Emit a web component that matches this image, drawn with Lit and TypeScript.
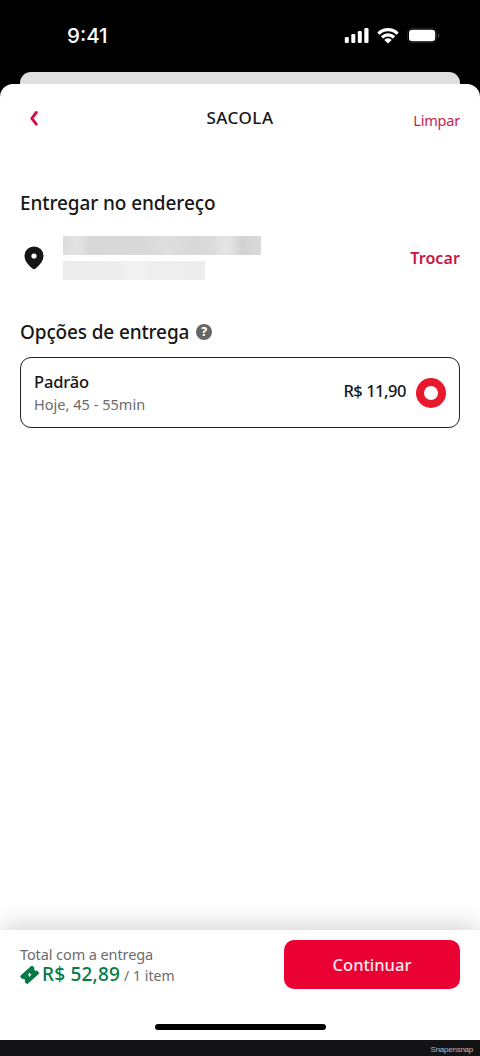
import { LitElement, html, css } from "lit";
import { customElement } from "lit/decorators.js";

@customElement("status-bar")
class StatusBar extends LitElement {
  static styles = css`
    :host { display: flex; height: 72px; box-sizing: border-box; padding: 24px 40px 0 67px; justify-content: space-between; color: #fff; }
    .time { font: 500 20.500px/24px Inter, sans-serif; height: 24px; }
    svg { display: block; margin-top: 1px; }
  `;
  render() {
    return html`
      <div class="time">9:41</div>
      <svg width="96" height="22" viewBox="344 25 96 22" fill="#fff">
        <rect x="344.8" y="37" width="4" height="6" rx="1.2" />
        <rect x="351.3" y="34" width="4" height="9" rx="1.2" />
        <rect x="357.8" y="31" width="4" height="12" rx="1.2" />
        <rect x="364.3" y="28" width="4.2" height="15" rx="1.2" />
        <path d="M388 28c4 0 7.600 1.500 10.300 4.100.3.300.3.600 0 .9l-1.500 1.500c-.3.300-.6.300-.9 0a11.400 11.400 0 0 0-15.800 0c-.3.300-.6.300-.9 0l-1.500-1.500c-.3-.3-.3-.6 0-.9A14.800 14.800 0 0 1 388 28Z" />
        <path d="M388 33.200c2.600 0 5 1 6.800 2.700.3.300.3.600 0 .9l-1.500 1.500c-.3.300-.6.300-.9 0a6.400 6.400 0 0 0-8.800 0c-.3.300-.6.300-.9 0l-1.500-1.500c-.3-.3-.3-.6 0-.9A9.800 9.800 0 0 1 388 33.200Z" />
        <path d="M388 38.300c1.300 0 2.400.4 3.300 1.200.3.300.3.600 0 .9l-2.800 2.500c-.3.300-.7.300-1 0l-2.800-2.500c-.3-.3-.3-.6 0-.9.9-.8 2-1.200 3.300-1.200Z" />
        <rect x="407.500" y="28.300" width="29" height="14.500" rx="4.500" fill="none" stroke="#242424" />
        <rect x="409" y="29.800" width="26.200" height="11.500" rx="3.300" />
        <path d="M438 33.300c1.800.8 1.800 3.700 0 4.500Z" fill="#555" />
      </svg>
    `;
  }
}

@customElement("address-section")
class AddressSection extends LitElement {
  static styles = css`
    :host { display: block; }
    .title { margin: 0; font-size: 19px; line-height: 26px; font-weight: 500; letter-spacing: -0.1px; white-space: nowrap; color: #161616; }
    .row { display: flex; align-items: center; margin-top: 19px; height: 45px; }
    .pin { display: block; margin: 0 19.400px 0 4px; flex: none; }
    .lines { display: flex; flex-direction: column; gap: 6px; flex: 1; }
    .bar { height: 19px; }
    .street { width: 198px; background: linear-gradient(90deg, #dcdcdc, #e3e3e3 7%, #d8d8d8 14%, #d9d9d9 40%, #dedede 53%, #d8d8d8 68%, #dcdcdc 76%, #e5e5e5 82%, #dfdfdf 86%, #d2d2d2 90%, #dadada); }
    .detail { width: 142px; background: linear-gradient(90deg, #ebebeb, #eee 40%, #f4f4f4 51%, #efefef 60%, #ededed); }
    .swap { color: #c91545; font-size: 16px; line-height: 24px; font-weight: 600; letter-spacing: 0.1px; }
  `;
  render() {
    return html`
      <h2 class="title">Entregar no endereço</h2>
      <div class="row">
        <svg class="pin" width="20" height="24" viewBox="0 0 20 24">
          <path fill="#161616" fill-rule="evenodd" d="M10 .5a9.300 9.300 0 0 0-9.500 9.200c0 5.600 4.300 9.600 7.800 12.700 1.100.9 2.300.9 3.400 0 3.500-3.100 7.800-7.100 7.800-12.700A9.300 9.300 0 0 0 10 .5Zm0 6.900a2.600 2.600 0 1 1 0 5.200 2.600 2.600 0 0 1 0-5.200Z" />
        </svg>
        <div class="lines"><div class="bar street"></div><div class="bar detail"></div></div>
        <span class="swap">Trocar</span>
      </div>
    `;
  }
}

@customElement("delivery-options")
class DeliveryOptions extends LitElement {
  static styles = css`
    :host { display: block; }
    .head { display: flex; align-items: center; gap: 7px; height: 26px; }
    .title { margin: 0; font-size: 19px; line-height: 26px; font-weight: 500; letter-spacing: -0.14px; white-space: nowrap; color: #161616; }
    .help { width: 16px; height: 16px; border-radius: 50%; background: #666; color: #fff; font-size: 12px; line-height: 16px; font-weight: 800; text-align: center; }
    .card { display: flex; align-items: center; margin-top: 12px; height: 71px; box-sizing: border-box; border: 1.500px solid #222; border-radius: 11px; padding: 0 13px; }
    .info { flex: 1; }
    .name { font-size: 16.500px; line-height: 23px; font-weight: 500; letter-spacing: -0.15px; color: #161616; }
    .when { font-size: 14.500px; line-height: 22px; color: #6b6b6b; letter-spacing: 0.03px; }
    .price { font-size: 16.500px; line-height: 24px; font-weight: 500; letter-spacing: -0.48px; color: #161616; margin: 0 10px 4px 0; white-space: nowrap; }
    .radio { width: 30px; height: 30px; box-sizing: border-box; border: 8px solid #e8192c; border-radius: 50%; }
  `;
  render() {
    return html`
      <div class="head"><h2 class="title">Opções de entrega</h2><span class="help">?</span></div>
      <div class="card">
        <div class="info">
          <div class="name"><span>Padrão</span></div>
          <div class="when"><span>Hoje, 45 - 55min</span></div>
        </div>
        <span class="price">R$ 11,90</span>
        <span class="radio"></span>
      </div>
    `;
  }
}

@customElement("checkout-bar")
class CheckoutBar extends LitElement {
  static styles = css`
    :host { display: flex; flex-direction: column; height: 110px; background: #fff; box-shadow: 0 -2px 26px rgba(0, 0, 0, 0.2); }
    .row { display: flex; justify-content: space-between; padding: 10px 20px 0; height: 49px; }
    .label { font-size: 14.500px; line-height: 20px; margin-top: 4px; color: #6b6b6b; letter-spacing: -0.1px; white-space: nowrap; }
    .total { display: flex; align-items: baseline; white-space: nowrap; line-height: 20px; }
    .ticket { align-self: center; margin: 0 2px 1px 0; }
    .value { font-size: 19px; font-weight: 500; color: #057a45; letter-spacing: 0.2px; }
    .count { font-size: 14px; color: #6b6b6b; margin-left: 4px; letter-spacing: 0.05px; }
    .button { width: 176px; height: 49px; border: 0; padding: 0 0 1px; border-radius: 10px; background: #eb0033; color: #ffe9ee; font: inherit; font-size: 16.500px; font-weight: 500; }
    .home { width: 171px; height: 6px; border-radius: 3px; background: #000; margin: 35px auto 0; }
  `;
  render() {
    return html`
      <div class="row">
        <div>
          <div class="label"><span>Total com a entrega</span></div>
          <div class="total">
            <svg class="ticket" width="20" height="18" viewBox="0 0 20 18">
              <g transform="translate(9.600 8.800) rotate(-42)" fill="#057a45">
                <path fill-rule="evenodd" d="M-7-5.500h14q1.300 0 1.300 1.300v2.400q-1.500.4-1.500 1.800t1.500 1.800v2.400q0 1.300-1.300 1.300h-14q-1.300 0-1.300-1.300v-2.400q1.500-.4 1.500-1.800t-1.500-1.800v-2.400q0-1.300 1.300-1.300Z" />
                <path fill="#fff" transform="rotate(42)" d="M0-2.500.7-.6 2.200 0 .7.6 0 2.500-.7.6-2.200 0-.7-.6Z" />
              </g>
            </svg>
            <span class="value">R$ 52,89</span><span class="count">/ 1 item</span>
          </div>
        </div>
        <button class="button"><span>Continuar</span></button>
      </div>
      <div class="home"></div>
    `;
  }
}

@customElement("app-root")
class AppRoot extends LitElement {
  static styles = css`
    :host { display: flex; flex-direction: column; width: 480px; height: 1056px; overflow: hidden; background: #000; font-family: "Noto Sans", "Open Sans", sans-serif; }
    .behind { height: 12px; margin: 0 20px; border-radius: 11px 11px 0 0; background: #dfdfdf; flex: none; }
    .sheet { flex: 1; display: flex; flex-direction: column; background: #fff; border-radius: 13px 13px 0 0; overflow: hidden; }
    .nav { display: grid; grid-template-columns: 1fr auto 1fr; align-items: center; padding: 0 20px 0 29px; height: 68px; }
    .back { display: block; }
    .heading { font-size: 17px; line-height: 24px; font-weight: 500; letter-spacing: 0.5px; color: #161616; margin-left: -9px; }
    .clear { justify-self: end; font-size: 14.500px; line-height: 22px; letter-spacing: -0.2px; color: #c9244e; padding-top: 4px; }
    .body { flex: 1; padding: 38px 20px 0; display: flex; flex-direction: column; gap: 39px; }
    .foot { height: 16px; background: #131315; color: #bcbcbc; font: 8px/19px "Liberation Sans", sans-serif; letter-spacing: -0.25px; text-align: right; padding-right: 7px; flex: none; }
  `;
  render() {
    return html`
      <status-bar></status-bar>
      <div class="behind"></div>
      <main class="sheet">
        <header class="nav">
          <svg class="back" width="10" height="15" viewBox="0 0 10 15"><path d="M7.300 1.500 2.800 7.300l4.500 5.800" fill="none" stroke="#d00f43" stroke-width="2.900" stroke-linecap="round" stroke-linejoin="round" /></svg>
          <span class="heading">SACOLA</span>
          <span class="clear">Limpar</span>
        </header>
        <div class="body">
          <address-section></address-section>
          <delivery-options></delivery-options>
        </div>
        <checkout-bar></checkout-bar>
      </main>
      <div class="foot"><span>Snapensnap</span></div>
    `;
  }
}
